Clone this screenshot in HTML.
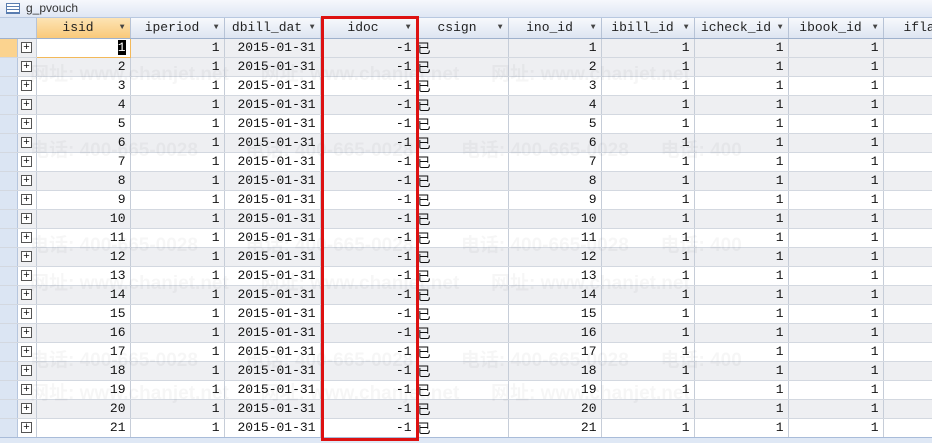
<!DOCTYPE html>
<html><head><meta charset="utf-8"><style>
*{margin:0;padding:0;box-sizing:border-box}
body{width:932px;height:443px;overflow:hidden;background:#fff;font-family:"Liberation Mono","Noto Sans CJK SC",monospace;font-size:13px;color:#111;position:relative}
.title{position:absolute;left:0;top:0;width:932px;height:18px;background:linear-gradient(#f6f8fc,#dfe7f4);border-bottom:1px solid #b8c8e0;font-family:"Liberation Sans",sans-serif;font-size:12px;color:#333;padding-left:26px;line-height:17px}
.ticon{position:absolute;left:6px;top:3px;width:14px;height:11px;border:1px solid #5a7db0;background:repeating-linear-gradient(#fff 0 2px,#5a7db0 2px 3px)}
table{position:absolute;left:0;top:18px;border-collapse:collapse;table-layout:fixed;width:1023px}
td,th{height:19px;border-right:1px solid #c6cdd8;border-bottom:1px solid #d3d8e0;padding:0 4px;white-space:nowrap;overflow:hidden;font-weight:normal;line-height:18px}
th{height:20px;background:linear-gradient(#f7f9fc,#dde5f1);border-right:1px solid #b7c3d6;border-bottom:1px solid #9fb1cc;text-align:center;padding-right:14px;position:relative;color:#222}
th span{font-size:8px;color:#444;position:absolute;right:5px;top:1px}
td{text-align:right}
td.s{background:#dbe5f3;border-right:1px solid #b6c6de;padding:0}
td.e{text-align:center;padding:0}
td.e i{display:inline-block;width:11px;height:11px;border:1px solid #555;background:#fff;font-style:normal;font-size:11px;line-height:8px;text-align:center;font-family:"Liberation Sans",sans-serif;vertical-align:middle}
tr.g td{background:#eeeff2}
tr.g td.s{background:#dbe5f3}
td.l{text-align:left;padding-left:1px;font-family:"Noto Sans CJK SC",sans-serif}
.red{position:absolute;left:321px;top:16px;width:98px;height:425px;border:3px solid #dd1111}
.bot{position:absolute;left:0;top:437px;width:932px;height:6px;background:#dfe8f5;border-top:1px solid #a9bcd9}
.wm{position:absolute;color:rgba(0,0,0,0.035);font-family:"Liberation Sans","Noto Sans CJK SC",sans-serif;font-size:19px;font-weight:bold;white-space:nowrap}
</style></head><body>
<div class="title"><div class="ticon"></div>g_pvouch</div>
<table>
<colgroup><col style="width:17px"><col style="width:19px"><col style="width:94px"><col style="width:94px"><col style="width:96px"><col style="width:96px"><col style="width:92px"><col style="width:93px"><col style="width:93px"><col style="width:94px"><col style="width:95px"><col style="width:140px"></colgroup>
<tr><th style="background:#dbe5f3;border-right:none;padding:0"></th><th style="background:#dbe5f3;padding:0"></th><th style="background:linear-gradient(#fde4b4,#f9c97a)">isid<span>▼</span></th><th>iperiod<span>▼</span></th><th>dbill_dat<span>▼</span></th><th>idoc<span>▼</span></th><th>csign<span>▼</span></th><th>ino_id<span>▼</span></th><th>ibill_id<span>▼</span></th><th>icheck_id<span>▼</span></th><th>ibook_id<span>▼</span></th><th style="text-align:left;padding-left:20px">ifla</th></tr>
<tr class="g"><td class="s" style="background:#fbd38f"></td><td class="e"><i>+</i></td><td style="background:#fff;border:1px solid #f3b95a"><span style="background:#000;color:#fff">1</span></td><td>1</td><td>2015-01-31</td><td>-1</td><td class="l">已</td><td>1</td><td>1</td><td>1</td><td>1</td><td></td></tr>
<tr class="g"><td class="s"></td><td class="e"><i>+</i></td><td>2</td><td>1</td><td>2015-01-31</td><td>-1</td><td class="l">已</td><td>2</td><td>1</td><td>1</td><td>1</td><td></td></tr>
<tr><td class="s"></td><td class="e"><i>+</i></td><td>3</td><td>1</td><td>2015-01-31</td><td>-1</td><td class="l">已</td><td>3</td><td>1</td><td>1</td><td>1</td><td></td></tr>
<tr class="g"><td class="s"></td><td class="e"><i>+</i></td><td>4</td><td>1</td><td>2015-01-31</td><td>-1</td><td class="l">已</td><td>4</td><td>1</td><td>1</td><td>1</td><td></td></tr>
<tr><td class="s"></td><td class="e"><i>+</i></td><td>5</td><td>1</td><td>2015-01-31</td><td>-1</td><td class="l">已</td><td>5</td><td>1</td><td>1</td><td>1</td><td></td></tr>
<tr class="g"><td class="s"></td><td class="e"><i>+</i></td><td>6</td><td>1</td><td>2015-01-31</td><td>-1</td><td class="l">已</td><td>6</td><td>1</td><td>1</td><td>1</td><td></td></tr>
<tr><td class="s"></td><td class="e"><i>+</i></td><td>7</td><td>1</td><td>2015-01-31</td><td>-1</td><td class="l">已</td><td>7</td><td>1</td><td>1</td><td>1</td><td></td></tr>
<tr class="g"><td class="s"></td><td class="e"><i>+</i></td><td>8</td><td>1</td><td>2015-01-31</td><td>-1</td><td class="l">已</td><td>8</td><td>1</td><td>1</td><td>1</td><td></td></tr>
<tr><td class="s"></td><td class="e"><i>+</i></td><td>9</td><td>1</td><td>2015-01-31</td><td>-1</td><td class="l">已</td><td>9</td><td>1</td><td>1</td><td>1</td><td></td></tr>
<tr class="g"><td class="s"></td><td class="e"><i>+</i></td><td>10</td><td>1</td><td>2015-01-31</td><td>-1</td><td class="l">已</td><td>10</td><td>1</td><td>1</td><td>1</td><td></td></tr>
<tr><td class="s"></td><td class="e"><i>+</i></td><td>11</td><td>1</td><td>2015-01-31</td><td>-1</td><td class="l">已</td><td>11</td><td>1</td><td>1</td><td>1</td><td></td></tr>
<tr class="g"><td class="s"></td><td class="e"><i>+</i></td><td>12</td><td>1</td><td>2015-01-31</td><td>-1</td><td class="l">已</td><td>12</td><td>1</td><td>1</td><td>1</td><td></td></tr>
<tr><td class="s"></td><td class="e"><i>+</i></td><td>13</td><td>1</td><td>2015-01-31</td><td>-1</td><td class="l">已</td><td>13</td><td>1</td><td>1</td><td>1</td><td></td></tr>
<tr class="g"><td class="s"></td><td class="e"><i>+</i></td><td>14</td><td>1</td><td>2015-01-31</td><td>-1</td><td class="l">已</td><td>14</td><td>1</td><td>1</td><td>1</td><td></td></tr>
<tr><td class="s"></td><td class="e"><i>+</i></td><td>15</td><td>1</td><td>2015-01-31</td><td>-1</td><td class="l">已</td><td>15</td><td>1</td><td>1</td><td>1</td><td></td></tr>
<tr class="g"><td class="s"></td><td class="e"><i>+</i></td><td>16</td><td>1</td><td>2015-01-31</td><td>-1</td><td class="l">已</td><td>16</td><td>1</td><td>1</td><td>1</td><td></td></tr>
<tr><td class="s"></td><td class="e"><i>+</i></td><td>17</td><td>1</td><td>2015-01-31</td><td>-1</td><td class="l">已</td><td>17</td><td>1</td><td>1</td><td>1</td><td></td></tr>
<tr class="g"><td class="s"></td><td class="e"><i>+</i></td><td>18</td><td>1</td><td>2015-01-31</td><td>-1</td><td class="l">已</td><td>18</td><td>1</td><td>1</td><td>1</td><td></td></tr>
<tr><td class="s"></td><td class="e"><i>+</i></td><td>19</td><td>1</td><td>2015-01-31</td><td>-1</td><td class="l">已</td><td>19</td><td>1</td><td>1</td><td>1</td><td></td></tr>
<tr class="g"><td class="s"></td><td class="e"><i>+</i></td><td>20</td><td>1</td><td>2015-01-31</td><td>-1</td><td class="l">已</td><td>20</td><td>1</td><td>1</td><td>1</td><td></td></tr>
<tr><td class="s"></td><td class="e"><i>+</i></td><td>21</td><td>1</td><td>2015-01-31</td><td>-1</td><td class="l">已</td><td>21</td><td>1</td><td>1</td><td>1</td><td></td></tr>
</table>
<div class="wm" style="left:30px;top:135px">电话: 400-665-0028 &nbsp;&nbsp;&nbsp;&nbsp;&nbsp;&nbsp;&nbsp; 电话: 400-665-0028 &nbsp;&nbsp;&nbsp;&nbsp;&nbsp;&nbsp;&nbsp; 电话: 400-665-0028 &nbsp;&nbsp;&nbsp;&nbsp; 电话: 400</div>
<div class="wm" style="left:30px;top:59px">网址: www.chanjet.net &nbsp;&nbsp;&nbsp;&nbsp; 网址: www.chanjet.net &nbsp;&nbsp;&nbsp;&nbsp; 网址: www.chanjet.net</div>
<div class="wm" style="left:30px;top:230px">电话: 400-665-0028 &nbsp;&nbsp;&nbsp;&nbsp;&nbsp;&nbsp;&nbsp; 电话: 400-665-0028 &nbsp;&nbsp;&nbsp;&nbsp;&nbsp;&nbsp;&nbsp; 电话: 400-665-0028 &nbsp;&nbsp;&nbsp;&nbsp; 电话: 400</div>
<div class="wm" style="left:30px;top:268px">网址: www.chanjet.net &nbsp;&nbsp;&nbsp;&nbsp; 网址: www.chanjet.net &nbsp;&nbsp;&nbsp;&nbsp; 网址: www.chanjet.net</div>
<div class="wm" style="left:30px;top:345px">电话: 400-665-0028 &nbsp;&nbsp;&nbsp;&nbsp;&nbsp;&nbsp;&nbsp; 电话: 400-665-0028 &nbsp;&nbsp;&nbsp;&nbsp;&nbsp;&nbsp;&nbsp; 电话: 400-665-0028 &nbsp;&nbsp;&nbsp;&nbsp; 电话: 400</div>
<div class="wm" style="left:30px;top:378px">网址: www.chanjet.net &nbsp;&nbsp;&nbsp;&nbsp; 网址: www.chanjet.net &nbsp;&nbsp;&nbsp;&nbsp; 网址: www.chanjet.net</div>
<div class="bot"></div>
<div class="red"></div>
</body></html>
